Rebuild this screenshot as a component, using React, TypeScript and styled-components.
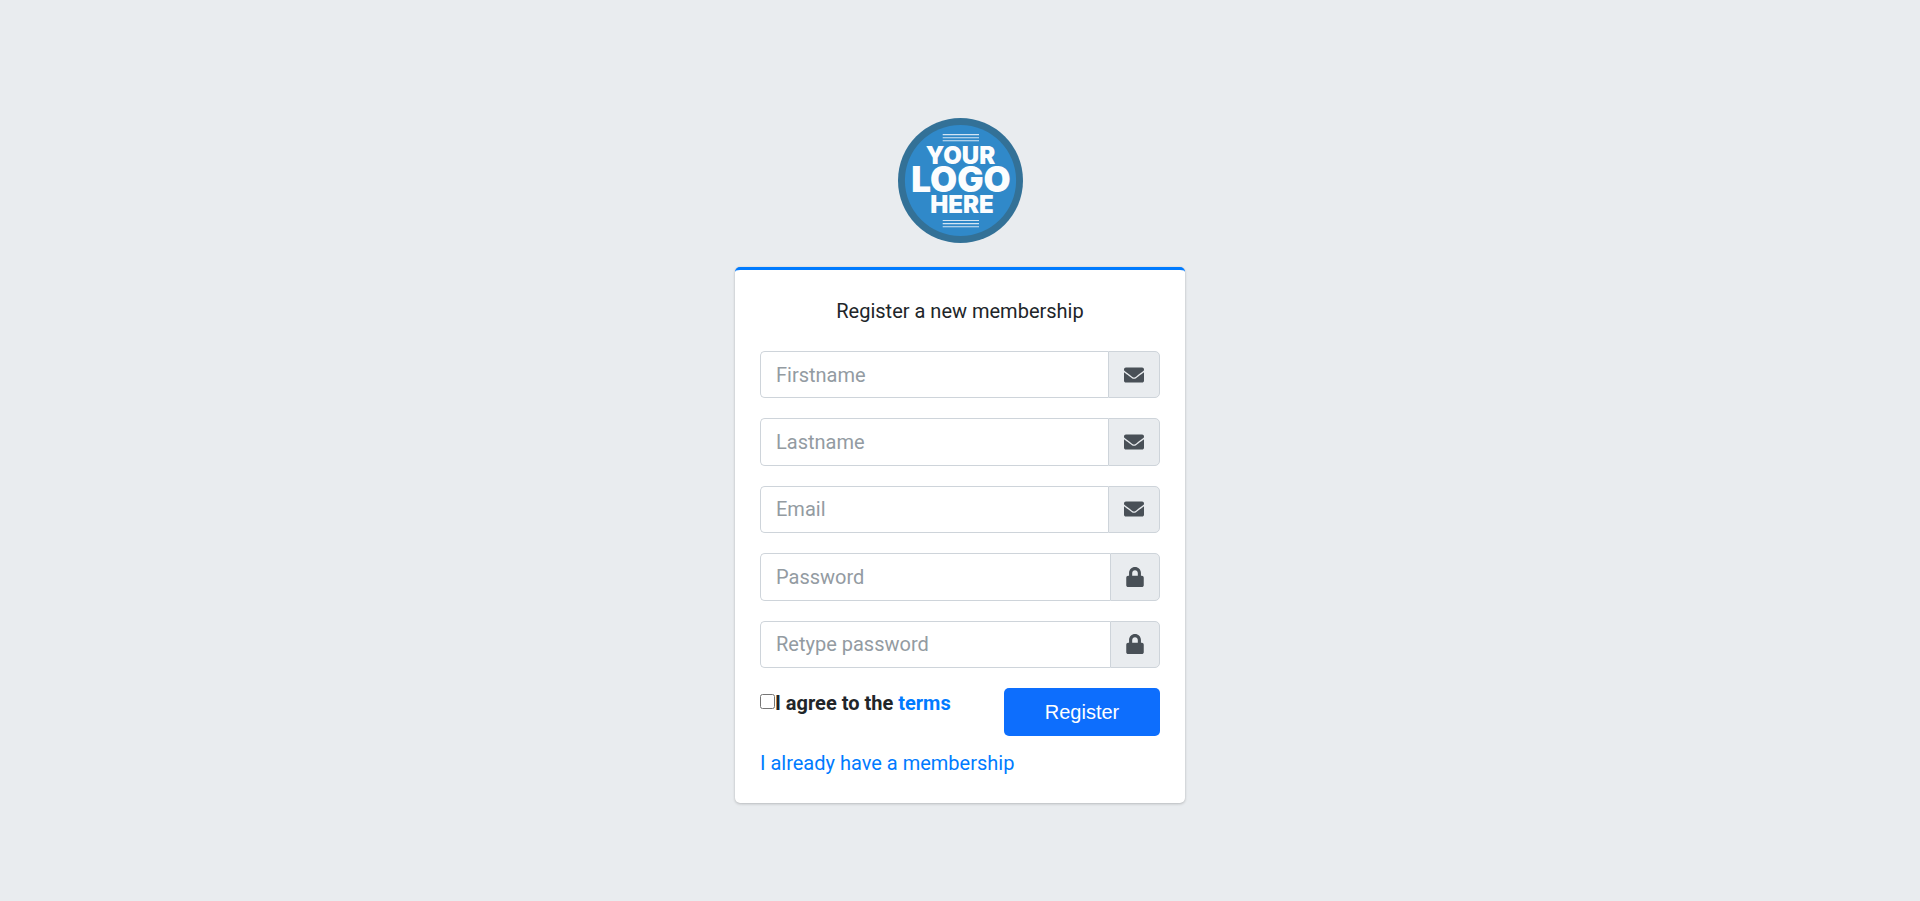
import React from "react";
import styled, { createGlobalStyle } from "styled-components";
import { FaEnvelope, FaLock } from "react-icons/fa";

const GlobalStyle = createGlobalStyle`
  *, *::before, *::after { box-sizing: border-box; }
  body {
    margin: 0;
    background: #e9ecef;
    color: #212529;
    font-family: Roboto, "Liberation Sans", sans-serif;
    font-size: 20px;
    line-height: 30px;
  }
`;

const Page = styled.main`
  display: flex;
  flex-direction: column;
  align-items: center;
  justify-content: center;
  min-height: 100vh;
  padding-top: 20px;
`;

const RegisterBox = styled.div`
  width: 450px;
  max-width: 90%;
`;

const LogoRow = styled.div`
  display: flex;
  justify-content: center;
  margin-bottom: 24px;
`;

const LogoWord = styled.text`
  fill: #fcfdfe;
  font-family: Inter, "Open Sans", sans-serif;
  font-weight: 900;
  text-anchor: middle;
`;

const Card = styled.section`
  padding: 26px 25px 25px;
  border-top: 3px solid #007bff;
  border-radius: 5px;
  background: #fff;
  box-shadow: 0 0 1px rgba(0, 0, 0, 0.125), 0 1px 3px rgba(0, 0, 0, 0.2);
`;

const Message = styled.p`
  margin: 0 0 25px;
  text-align: center;
`;

const Fields = styled.div`
  display: grid;
  grid-auto-rows: 1fr;
  gap: 20px;
  min-height: 317px;
`;

const InputGroup = styled.div`
  display: flex;
`;

const Input = styled.input`
  flex: 1;
  min-width: 0;
  padding: 0 15px;
  border: 1px solid #ced4da;
  border-right: 0;
  border-radius: 5px 0 0 5px;
  background: #fff;
  color: #495057;
  font: inherit;
  outline: none;

  &::placeholder {
    color: #939ba2;
    opacity: 1;
  }
  &:focus {
    border-color: #80bdff;
  }
`;

const Addon = styled.label<{ $iconWidth: number }>`
  display: flex;
  align-items: center;
  padding: 0 15px;
  border: 1px solid #ced4da;
  border-radius: 0 5px 5px 0;
  background: #e9ecef;
  color: #495057;

  svg {
    width: ${(p) => p.$iconWidth}px;
    height: 20px;
  }
`;

const Actions = styled.div`
  display: flex;
  align-items: flex-start;
  justify-content: space-between;
  margin-top: 20px;
`;

const Terms = styled.div`
  display: flex;
  align-items: flex-start;
  font-weight: 700;
`;

const Checkbox = styled.input`
  width: 15px;
  height: 15px;
  margin: 6px 0 0;
`;

const Link = styled.a`
  color: #007bff;
  text-decoration: none;

  &:hover {
    text-decoration: underline;
  }
`;

const SubmitButton = styled.button`
  width: 156px;
  height: 48px;
  border: 0;
  border-radius: 5px;
  background: #0d6efd;
  color: #fff;
  font-family: "Liberation Sans", Arial, sans-serif;
  font-size: 20px;
  cursor: pointer;
`;

const SignIn = styled.p`
  margin: 12px 0 0;
`;

const envelope = { Icon: FaEnvelope, iconWidth: 20 };
const lock = { Icon: FaLock, iconWidth: 18 };

const fields = [
  { id: "firstname", label: "Firstname", type: "text", ...envelope },
  { id: "lastname", label: "Lastname", type: "text", ...envelope },
  { id: "email", label: "Email", type: "email", ...envelope },
  { id: "password", label: "Password", type: "password", ...lock },
  { id: "retype", label: "Retype password", type: "password", ...lock },
];

const Logo = () => (
  <svg width="125" height="125" viewBox="0 0 125 125" role="img" aria-label="Your logo here">
    <circle cx="62.5" cy="62.5" r="62.5" fill="#337197" />
    <circle cx="62.5" cy="62.5" r="55.6" fill="#3089c9" />
    <path
      d="M44.7 16.6H81M44.7 19.7H81M44.7 22.8H81M44.7 102.5H81M44.7 105.6H81M44.7 108.7H81"
      stroke="#d3e5f3"
      strokeWidth="1.1"
    />
    <LogoWord x="62.5" y="46" fontSize="24">YOUR</LogoWord>
    <LogoWord x="63" y="74" fontSize="35">LOGO</LogoWord>
    <LogoWord x="64" y="95" fontSize="24">HERE</LogoWord>
  </svg>
);

export default function App() {
  return (
    <>
      <GlobalStyle />
      <Page>
        <RegisterBox>
          <LogoRow>
            <Logo />
          </LogoRow>
          <Card>
            <Message>Register a new membership</Message>
            <form onSubmit={(e) => e.preventDefault()}>
              <Fields>
                {fields.map(({ id, label, type, Icon, iconWidth }) => (
                  <InputGroup key={id}>
                    <Input id={id} name={id} type={type} placeholder={label} />
                    <Addon htmlFor={id} aria-label={label} $iconWidth={iconWidth}>
                      <Icon aria-hidden="true" />
                    </Addon>
                  </InputGroup>
                ))}
              </Fields>
              <Actions>
                <Terms>
                  <Checkbox id="terms" name="terms" type="checkbox" />
                  <label htmlFor="terms">
                    I agree to the <Link href="#terms">terms</Link>
                  </label>
                </Terms>
                <SubmitButton type="submit">Register</SubmitButton>
              </Actions>
            </form>
            <SignIn>
              <Link href="#login">I already have a membership</Link>
            </SignIn>
          </Card>
        </RegisterBox>
      </Page>
    </>
  );
}
